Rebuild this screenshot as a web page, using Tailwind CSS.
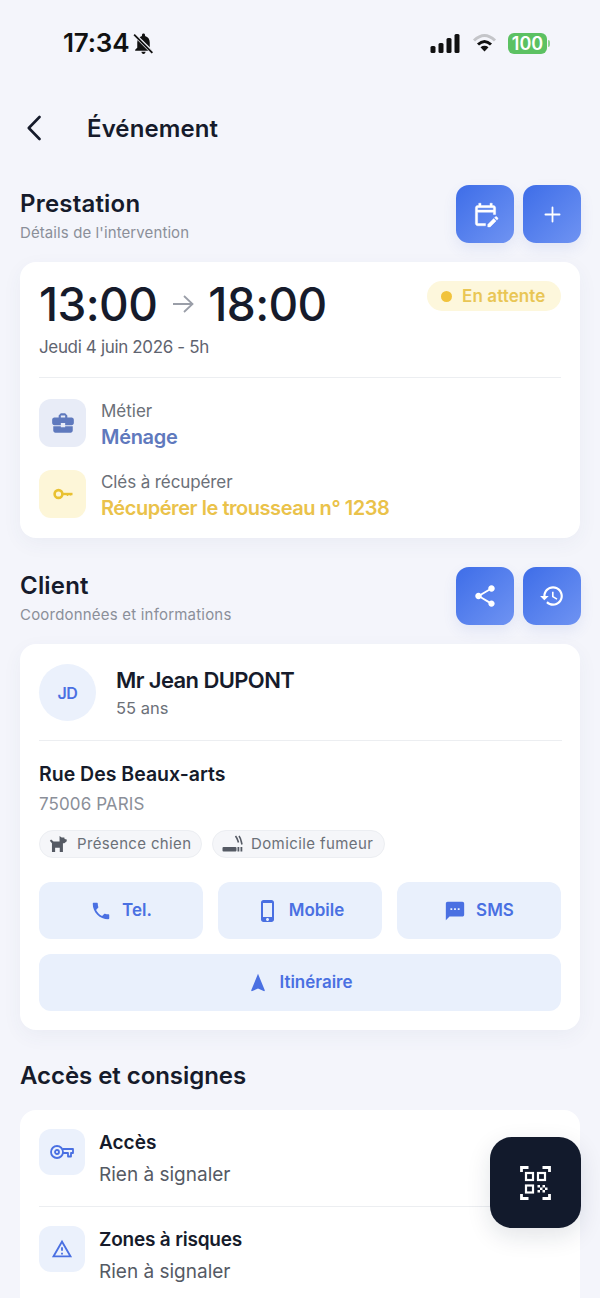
<!DOCTYPE html>
<html lang="fr">
<head>
<meta charset="utf-8">
<title>Événement</title>
<script src="https://cdn.jsdelivr.net/npm/@tailwindcss/browser@4"></script>
</head>
<body class="bg-[#f4f5fb]">
<div class="relative w-[600px] h-[1298px] overflow-hidden bg-[#f4f5fb] text-[#161b2b] [font-family:Inter,sans-serif]">

    <!-- status bar -->
    <div class="h-[86px] flex items-center justify-between pl-[63px] pr-[50px]">
        <div class="flex items-center gap-[2px]">
            <span class="text-[26px] leading-[30px] font-semibold tracking-[-0.2px] text-[#111]">17:34</span>
            <svg class="w-[25px] h-[25px]" viewBox="0 0 24 24" fill="#111">
                <path d="M12 22c1.100 0 2-.9 2-2h-4c0 1.100.9 2 2 2zm6-6v-5c0-3.070-1.630-5.640-4.500-6.320V4c0-.83-.67-1.500-1.500-1.500s-1.500.67-1.500 1.500v.68C7.640 5.360 6 7.920 6 11v5l-2 2v1h16v-1l-2-2z"/>
                <path d="M3.500 3.500 21 21" stroke="#f4f5fb" stroke-width="3.400"/>
                <path d="M3 3.500 20.500 21" stroke="#111" stroke-width="1.700"/>
            </svg>
        </div>
        <div class="flex items-center">
            <svg class="w-[31px] h-[20px]" viewBox="0 0 31 20" fill="#111">
                <rect x="0.500" y="13" width="5" height="7" rx="1.500"/>
                <rect x="8.500" y="10" width="5" height="10" rx="1.500"/>
                <rect x="16.500" y="5" width="5" height="15" rx="1.500"/>
                <rect x="24.500" y="1" width="5" height="19" rx="1.500"/>
            </svg>
            <svg class="ml-[11px] w-[25px] h-[20px]" viewBox="0 0 24 20" fill="none">
                <path d="M1.500 7.500C8.500 .8 15.500 .8 22.500 7.500" stroke="#c4c5c9" stroke-width="3"/>
                <path d="M5.500 11.500C10 7.300 14 7.300 18.500 11.500" stroke="#111" stroke-width="3"/>
                <path d="M8 14.200C10.500 12.300 13.500 12.300 16 14.200L12 18.500z" fill="#111"/>
            </svg>
            <div class="ml-[11px] flex items-center">
                <div class="w-[39px] h-[21px] rounded-[6px] bg-[#5cc162] text-white text-[18px] leading-[21px] font-semibold text-center">100</div>
                <div class="w-[2px] h-[7px] ml-[1px] rounded-r-full bg-[#8fd393]"></div>
            </div>
        </div>
    </div>

    <!-- header -->
    <div class="h-[84px] flex items-center pl-[27px]">
        <svg class="w-[14px] h-[26px]" viewBox="0 0 14 26" fill="none" stroke="#161b2b" stroke-width="2.600" stroke-linecap="round" stroke-linejoin="round"><path d="M12.500 2 1.800 13l10.700 11"/></svg>
        <h1 class="ml-[46px] pt-[1px] text-[24px] leading-[30px] font-semibold tracking-[0.1px]">Événement</h1>
    </div>

    <div class="pl-[20px] pr-[20px] pt-[15px]">

        <!-- prestation -->
        <div class="flex justify-between mr-[-1px]">
            <div class="pt-[4px]">
                <h2 class="text-[24px] leading-[30px] font-semibold tracking-[0.2px]">Prestation</h2>
                <p class="mt-[4px] text-[15px] leading-[20px] text-[#8b8f99] tracking-[0.1px]">Détails de l'intervention</p>
            </div>
            <div class="flex gap-[9px]">
                <button class="w-[58px] h-[58px] rounded-[13px] flex items-center justify-center bg-linear-to-br from-[#3e6de8] to-[#6f93f2] shadow-[0_6px_14px_rgba(70,100,200,0.1)]">
                    <svg class="w-[27px] h-[27px]" viewBox="0 0 24 24" fill="#fff" stroke="#fff" stroke-width="0.400"><path d="M5 10h14v2h2V6c0-1.100-.9-2-2-2h-1V2h-2v2H8V2H6v2H5c-1.110 0-1.990.9-1.990 2L3 20c0 1.100.89 2 2 2h7v-2H5v-10zm0-4h14v2H5V6zm17.840 10.280-.71.71-2.120-2.120.71-.71c.39-.39 1.020-.39 1.410 0l.71.71c.39.39.39 1.020 0 1.410zm-3.540-.7 2.120 2.120-5.300 5.300H14v-2.120l5.300-5.300z"/></svg>
                </button>
                <button class="w-[58px] h-[58px] rounded-[13px] flex items-center justify-center bg-linear-to-br from-[#3e6de8] to-[#6f93f2] shadow-[0_6px_14px_rgba(70,100,200,0.1)]">
                    <svg class="w-[17px] h-[17px]" viewBox="0 0 18 18" fill="none" stroke="#fff" stroke-width="1.900" stroke-linecap="round"><path d="M9 1.500v15M1.500 9h15"/></svg>
                </button>
            </div>
        </div>

        <div class="mt-[19px] h-[276px] rounded-[16px] bg-white px-[19px] pt-[19px] shadow-[0_6px_20px_rgba(60,70,110,0.05)]">
            <div class="flex justify-between items-start">
                <div class="flex items-center">
                    <span class="text-[46px] leading-[46px] font-medium tracking-[-0.6px]">13:00</span>
                    <svg class="ml-[15px] w-[22px] h-[20px]" viewBox="0 0 22 20" fill="none" stroke="#9a9ea8" stroke-width="1.800"><path d="M1 10h19M12 2l8.500 8-8.500 8"/></svg>
                    <span class="ml-[14px] text-[46px] leading-[46px] font-medium tracking-[-0.6px]">18:00</span>
                </div>
                <div class="w-[134px] h-[30px] rounded-full bg-[#fdf7dc] flex items-center pl-[14px]">
                    <span class="w-[11px] h-[11px] rounded-full bg-[#f1c33c]"></span>
                    <span class="ml-[10px] pt-[1px] text-[17px] leading-[29px] font-semibold text-[#e9c655] tracking-[0.1px]">En attente</span>
                </div>
            </div>
            <p class="mt-[8px] text-[17px] leading-[24px] text-[#5f6470] tracking-[-0.35px]">Jeudi 4 juin 2026 - 5h</p>
            <div class="mt-[18px] h-px bg-[#eceef1]"></div>

            <div class="mt-[21px] h-[48px] flex">
                <div class="w-[47px] h-[48px] rounded-[12px] bg-[#e8ecf7] flex items-center justify-center">
                    <svg class="w-[26px] h-[26px]" viewBox="0 0 24 24" fill="#5f79bd"><path d="M10 16v-1H3.010L3 19c0 1.110.89 2 2 2h14c1.110 0 2-.89 2-2v-4h-7v1h-4zm10-9h-4.010V5l-2-2h-4l-2 2v2H4c-1.100 0-2 .9-2 2v3c0 1.110.89 2 2 2h6v-2h4v2h6c1.100 0 2-.9 2-2V9c0-1.100-.9-2-2-2zm-6 0h-4V5h4v2z"/></svg>
                </div>
                <div class="ml-[15px] pt-[1px]">
                    <p class="text-[17px] leading-[22px] text-[#6b7078]">Métier</p>
                    <p class="mt-[2px] text-[20px] leading-[26px] font-semibold text-[#5f79bd] tracking-[-0.3px]">Ménage</p>
                </div>
            </div>
            <div class="mt-[23px] h-[48px] flex">
                <div class="w-[47px] h-[48px] rounded-[12px] bg-[#fdf6d8] flex items-center justify-center">
                    <svg class="w-[20px] h-[14px]" viewBox="0 0 20 14" fill="none" stroke="#e9c131"><circle cx="5.500" cy="7" r="3.900" stroke-width="2.600"/><path d="M9 7h10.500" stroke-width="2.400"/><path d="M14.500 7v2M17.500 7v1.500" stroke-width="1.500"/></svg>
                </div>
                <div class="ml-[15px] pt-[1px]">
                    <p class="text-[17px] leading-[22px] text-[#6b7078] tracking-[-0.1px]">Clés à récupérer</p>
                    <p class="mt-[2px] text-[20px] leading-[26px] font-semibold text-[#eac24a] whitespace-nowrap tracking-[-0.45px]">Récupérer le trousseau n° 1238</p>
                </div>
            </div>
        </div>

        <!-- client -->
        <div class="mt-[29px] flex justify-between mr-[-1px]">
            <div class="pt-[4px]">
                <h2 class="text-[24px] leading-[30px] font-semibold tracking-[0.2px]">Client</h2>
                <p class="mt-[4px] text-[15px] leading-[20px] text-[#8b8f99] tracking-[0.2px]">Coordonnées et informations</p>
            </div>
            <div class="flex gap-[9px]">
                <button class="w-[58px] h-[58px] rounded-[13px] flex items-center justify-center bg-linear-to-br from-[#3e6de8] to-[#6f93f2] shadow-[0_6px_14px_rgba(70,100,200,0.1)]">
                    <svg class="w-[26px] h-[26px]" viewBox="0 0 24 24" fill="#fff"><path d="M18 16.080c-.76 0-1.440.3-1.960.77L8.910 12.700c.05-.23.09-.46.09-.7s-.04-.47-.09-.7l7.050-4.110c.54.5 1.250.81 2.040.81 1.660 0 3-1.340 3-3s-1.340-3-3-3-3 1.340-3 3c0 .24.04.47.09.7L8.040 9.810C7.500 9.310 6.790 9 6 9c-1.660 0-3 1.340-3 3s1.340 3 3 3c.79 0 1.500-.31 2.040-.81l7.120 4.160c-.05.21-.08.43-.08.65 0 1.610 1.310 2.920 2.920 2.920 1.610 0 2.920-1.310 2.920-2.920s-1.310-2.920-2.920-2.920z"/></svg>
                </button>
                <button class="w-[58px] h-[58px] rounded-[13px] flex items-center justify-center bg-linear-to-br from-[#3e6de8] to-[#6f93f2] shadow-[0_6px_14px_rgba(70,100,200,0.1)]">
                    <svg class="w-[26px] h-[26px]" viewBox="0 0 24 24" fill="#fff"><path d="M13 3c-4.970 0-9 4.030-9 9H1l3.890 3.890.07.14L9 12H6c0-3.870 3.130-7 7-7s7 3.130 7 7-3.130 7-7 7c-1.930 0-3.680-.79-4.940-2.060l-1.420 1.420C8.270 19.990 10.510 21 13 21c4.970 0 9-4.030 9-9s-4.030-9-9-9zm-1 5v5l4.280 2.540.72-1.210-3.500-2.080V8H12z"/></svg>
                </button>
            </div>
        </div>

        <div class="mt-[19px] h-[386px] rounded-[16px] bg-white px-[19px] pt-[20px] shadow-[0_6px_20px_rgba(60,70,110,0.05)]">
            <div class="flex">
                <div class="w-[57px] h-[57px] rounded-full bg-[#ebf1fc] flex items-center justify-center text-[16px] font-semibold text-[#4a70e2] tracking-[-0.5px]">JD</div>
                <div class="ml-[20px] pt-[2px]">
                    <p class="text-[22px] leading-[28px] font-semibold tracking-[-0.6px]">Mr Jean DUPONT</p>
                    <p class="mt-[3px] text-[16.500px] leading-[22px] text-[#6b7078]">55 ans</p>
                </div>
            </div>
            <div class="mt-[19px] h-px bg-[#eceef1] mr-[-1px]"></div>
            <p class="mt-[20px] text-[19.500px] leading-[26px] font-semibold">Rue Des Beaux-arts</p>
            <p class="mt-[6px] text-[17px] leading-[22px] text-[#8b8f99] tracking-[0.1px]">75006 PARIS</p>
            <div class="mt-[15px] flex gap-[10px]">
                <div class="w-[163px] h-[28px] rounded-full bg-[#f5f6f9] border border-[#eceef2] flex items-center pl-[9px]">
                    <svg class="w-[19px] h-[18px]" viewBox="0 0 18 17" fill="#555a64"><path d="M10 1 12 2.300h2.500l.3 1.400 2 .5v1.800l-2.300 1.700h-1.300V16h-3V12H5.800v4h-3V7.800L.8 5.500 2 4.300l2.300 1.900H10z"/></svg>
                    <span class="ml-[9px] text-[15px] leading-[20px] text-[#6b7078] tracking-[0.35px]">Présence chien</span>
                </div>
                <div class="w-[173px] h-[28px] rounded-full bg-[#f5f6f9] border border-[#eceef2] flex items-center pl-[9px]">
                    <svg class="w-[21px] h-[18px]" viewBox="0 0 21 18" fill="#555a64">
                        <rect x="0.500" y="12" width="14" height="4.500" rx="1"/>
                        <rect x="15.500" y="12" width="1.800" height="4.500"/>
                        <rect x="18.500" y="12" width="1.800" height="4.500"/>
                        <path d="M13.500 1c2 2.500 2 4 3 6.500M17 1c2 2.500 2 5 3 8.500" fill="none" stroke="#555a64" stroke-width="1.600"/>
                    </svg>
                    <span class="ml-[8px] text-[15px] leading-[20px] text-[#6b7078] tracking-[0.4px] whitespace-nowrap">Domicile fumeur</span>
                </div>
            </div>
            <div class="mt-[24px] grid grid-cols-3 gap-x-[15px] gap-y-[15px]">
                <button class="h-[57px] rounded-[12px] bg-[#e9f0fc] flex items-center justify-center gap-[10px] text-[17px] font-semibold text-[#4a70e2]">
                    <svg class="w-[22px] h-[22px]" viewBox="0 0 24 24" fill="#4a70e2"><path d="M6.620 10.790c1.440 2.830 3.760 5.140 6.590 6.590l2.200-2.200c.27-.27.67-.36 1.020-.24 1.120.37 2.330.57 3.570.57.55 0 1 .45 1 1V20c0 .55-.45 1-1 1-9.390 0-17-7.610-17-17 0-.55.45-1 1-1h3.500c.55 0 1 .45 1 1 0 1.250.2 2.450.57 3.570.11.35.03.74-.25 1.020l-2.200 2.200z"/></svg>
                    <span class="pt-[1px]">Tel.</span>
                </button>
                <button class="h-[57px] rounded-[12px] bg-[#e9f0fc] flex items-center justify-center gap-[9px] text-[17px] font-semibold text-[#4a70e2]">
                    <svg class="w-[24px] h-[24px]" viewBox="0 0 24 24" fill="#4a70e2"><path d="M15.500 1h-8C6.120 1 5 2.120 5 3.500v17C5 21.880 6.120 23 7.500 23h8c1.380 0 2.500-1.120 2.500-2.500v-17C18 2.120 16.880 1 15.500 1zm-4 21c-.83 0-1.500-.67-1.500-1.500s.67-1.500 1.500-1.500 1.500.67 1.500 1.500-.67 1.500-1.500 1.500zm4.500-4H7V4h9v14z"/></svg>
                    <span class="pt-[1px]">Mobile</span>
                </button>
                <button class="h-[57px] rounded-[12px] bg-[#e9f0fc] flex items-center justify-center gap-[10px] text-[17px] font-semibold text-[#4a70e2]">
                    <svg class="w-[22px] h-[22px]" viewBox="0 0 24 24" fill="#4a70e2"><path d="M20 2H4c-1.100 0-1.990.9-1.990 2L2 22l4-4h14c1.100 0 2-.9 2-2V4c0-1.100-.9-2-2-2zM9 11H7V9h2v2zm4 0h-2V9h2v2zm4 0h-2V9h2v2z"/></svg>
                    <span class="pt-[1px]">SMS</span>
                </button>
                <button class="col-span-3 h-[57px] rounded-[12px] bg-[#e9f0fc] flex items-center justify-center gap-[10px] text-[17px] font-semibold text-[#4a70e2]">
                    <svg class="w-[22px] h-[22px]" viewBox="0 0 24 24" fill="#4a70e2"><path d="M12 2 4.500 20.290l.71.71L12 18l6.790 3 .71-.71z"/></svg>
                    <span class="pt-[1px]">Itinéraire</span>
                </button>
            </div>
        </div>

        <!-- acces -->
        <h2 class="mt-[31px] text-[24px] leading-[30px] font-semibold tracking-[-0.05px]">Accès et consignes</h2>
        <div class="mt-[19px] h-[220px] rounded-[16px] bg-white px-[19px] pt-[19px]">
            <div class="flex">
                <div class="w-[46px] h-[46px] rounded-[12px] bg-[#ebf1fc] flex items-center justify-center">
                    <svg class="w-[24px] h-[16px]" viewBox="0 0 24 16" fill="none" stroke="#4a70e2" stroke-width="1.800" stroke-linejoin="round"><circle cx="7" cy="8" r="6"/><circle cx="7" cy="8" r="2"/><path d="M12.500 5H23V9H21V12.500H18V9H12.500"/></svg>
                </div>
                <div class="ml-[14px] pt-[1px]">
                    <p class="text-[19px] leading-[26px] font-semibold">Accès</p>
                    <p class="mt-[6px] text-[19px] leading-[26px] text-[#555a64]">Rien à signaler</p>
                </div>
            </div>
            <div class="mt-[18px] h-px bg-[#eceef1]"></div>
            <div class="mt-[19px] flex">
                <div class="w-[46px] h-[46px] rounded-[12px] bg-[#ebf1fc] flex items-center justify-center">
                    <svg class="w-[22px] h-[22px]" viewBox="0 0 24 24" fill="#4a70e2"><path d="M12 5.990 19.530 19H4.470L12 5.990M12 2 1 21h22L12 2zm1 14h-2v2h2v-2zm0-6h-2v4h2v-4z"/></svg>
                </div>
                <div class="ml-[14px] pt-[1px]">
                    <p class="text-[19px] leading-[26px] font-semibold tracking-[-0.2px]">Zones à risques</p>
                    <p class="mt-[6px] text-[19px] leading-[26px] text-[#555a64]">Rien à signaler</p>
                </div>
            </div>
        </div>
    </div>

    <!-- qr floating button -->
    <button class="absolute left-[490px] top-[1137px] w-[91px] h-[91px] rounded-[22px] bg-[#121a2c] flex items-center justify-center shadow-[0_8px_24px_rgba(20,30,60,0.12)]">
        <svg class="w-[35px] h-[36px]" viewBox="0 0 32 36" fill="none" stroke="#fff" stroke-width="2.200">
            <path d="M2 7V2.500h7M23 2.500h7V7M2 29v4.500h7M23 33.500h7V29" stroke-width="2.800"/>
            <rect x="6.500" y="8" width="7" height="7"/>
            <rect x="18.500" y="8" width="7" height="7"/>
            <rect x="6.500" y="20.500" width="7" height="7"/>
            <path d="M18 20h2.500v2.500H18zM23 20h2.500v2.500H23zM20.500 22.500H23V25h-2.500zM25.500 22.500H28V25h-2.500zM18 25h2.500v2.500H18zM23 25h2.500v2.500H23z" fill="#fff" stroke="none"/>
        </svg>
    </button>
</div>
</body>
</html>
